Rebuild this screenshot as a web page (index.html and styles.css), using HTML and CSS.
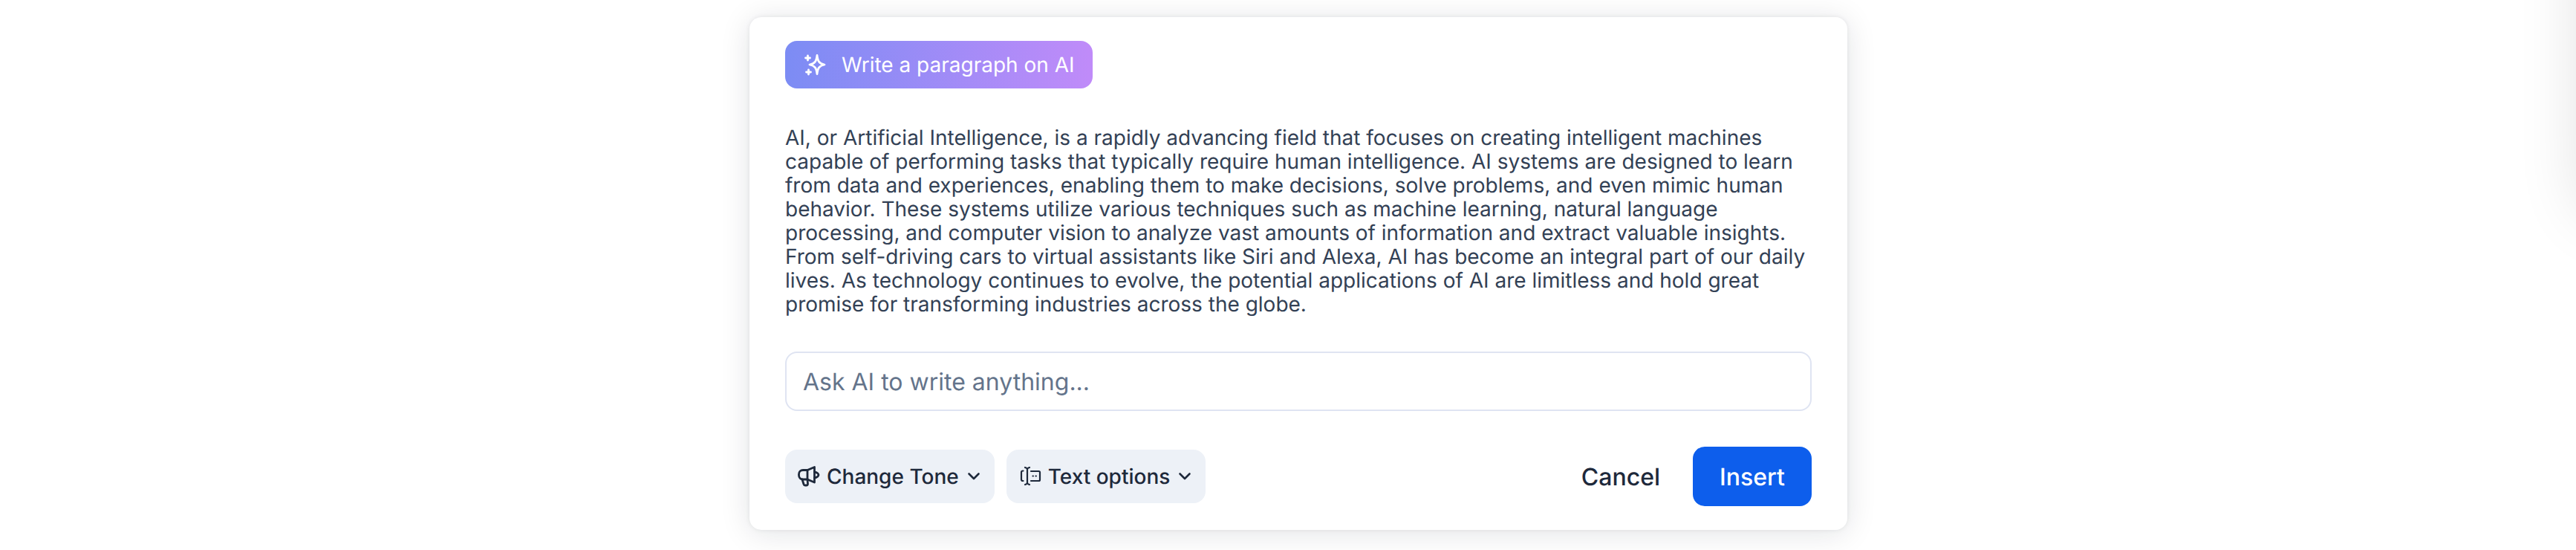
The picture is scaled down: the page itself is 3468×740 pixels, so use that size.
FILE: index.html
```html
<!DOCTYPE html>
<html lang="en">
<head>
<meta charset="utf-8">
<title>AI writer</title>
<link rel="stylesheet" href="styles.css">
</head>
<body>
<div class="edge-shade"></div>
<main class="card">
  <div class="prompt-pill">
    <svg class="pill-icon" viewBox="0 0 32 32" fill="none" stroke="#fff" stroke-width="2.8" stroke-linejoin="round" stroke-linecap="round">
      <path d="M19 3.500c1 8 2.700 11 10 12.500-7.300 1.500-9 4.500-10 12.500-1-8-2.700-11-10-12.500 7.300-1.500 9-4.500 10-12.500z"/>
      <path d="M6.500 4v6M3.500 7h6M7.500 23v6M4.500 26h6"/>
    </svg>
    <span>Write a paragraph on AI</span>
  </div>
  <p class="result">AI, or Artificial Intelligence, is a rapidly advancing field that focuses on creating intelligent machines capable of performing tasks that typically require human intelligence. AI systems are designed to learn from data and experiences, enabling them to make decisions, solve problems, and even mimic human behavior. These systems utilize various techniques such as machine learning, natural language processing, and computer vision to analyze vast amounts of information and extract valuable insights. From self-driving cars to virtual assistants like Siri and Alexa, AI has become an integral part of our daily lives. As technology continues to evolve, the potential applications of AI are limitless and hold great promise for transforming industries across the globe.</p>
  <input class="ask" type="text" placeholder="Ask AI to write anything...">
  <footer class="actions">
    <div class="chips">
      <button class="chip" type="button">
        <svg class="chip-icon" viewBox="0 0 32 32" fill="none" stroke="#1e293b" stroke-width="2.800" stroke-linejoin="round" stroke-linecap="round">
          <path d="M23.500 3.500L14 7.500H8A5.500 5.500 0 0 0 2.500 13v1.500A5.500 5.500 0 0 0 8 20h6l9.500 4z"/>
          <path d="M23.500 10c3.500.5 5.500 2.500 5.500 4s-2 3.500-5.500 4"/>
          <path d="M7 20l2 6.500a2 2 0 0 0 2 1.500h1.500a2 2 0 0 0 2-2L14 20"/>
          <path d="M14 7.500V20"/>
        </svg>
        <span>Change Tone</span>
        <svg class="chev" viewBox="0 0 24 24" fill="none" stroke="#1e293b" stroke-width="2.600" stroke-linecap="round" stroke-linejoin="round"><path d="M5.500 8.500l6.500 6.500 6.500-6.500"/></svg>
      </button>
      <button class="chip" type="button">
        <svg class="chip-icon" viewBox="0 0 32 32" fill="none" stroke="#1e293b" stroke-width="2.200" stroke-linecap="round" stroke-linejoin="round">
          <path d="M6.500 8.500H6Q4 8.500 4 10.500v9.500q0 2 2 2h.5"/>
          <path d="M17 9h10.500q1.500 0 1.500 1.500v10q0 1.500-1.500 1.500H17"/>
          <path d="M9 4l1.500.5q1.500.5 1.500 2.500v17q0 2-1.500 2.500L9 27M15 4l-1.500.5Q12 5 12 7M15 27l-1.500-.5Q12 26 12 24"/>
          <path d="M19.500 15.500h.4M23.500 15.500h.4"/>
        </svg>
        <span>Text options</span>
        <svg class="chev" viewBox="0 0 24 24" fill="none" stroke="#1e293b" stroke-width="2.600" stroke-linecap="round" stroke-linejoin="round"><path d="M5.500 8.500l6.500 6.500 6.500-6.500"/></svg>
      </button>
    </div>
    <div class="buttons">
      <button class="cancel" type="button">Cancel</button>
      <button class="insert" type="button">Insert</button>
    </div>
  </footer>
</main>
</body>
</html>
```
FILE: styles.css
```css
* { box-sizing: border-box; }
html, body { margin: 0; height: 100%; background: #fff; overflow: hidden; }
body {
  font-family: Inter, "Noto Sans", sans-serif;
  text-rendering: geometricPrecision;
  padding: 23px 0 0 1009px;
}
.edge-shade {
  position: fixed;
  left: 3480px;
  top: -200px;
  width: 100px;
  height: 480px;
  border-radius: 30px;
  box-shadow: 0 8px 90px rgba(0, 0, 0, 0.14);
}
.card {
  width: 1478px;
  height: 690px;
  padding: 32px 48px;
  background: #fff;
  border-radius: 16px;
  box-shadow: 0 4px 40px rgba(15, 23, 42, 0.12), 0 0 6px rgba(15, 23, 42, 0.08);
  display: flex;
  flex-direction: column;
}
.prompt-pill {
  align-self: flex-start;
  display: flex;
  align-items: center;
  gap: 20px;
  height: 64px;
  padding: 0 24px;
  border-radius: 16px;
  background: linear-gradient(90deg, #7c8cf4, #c08bf9);
  color: #fff;
  font-size: 28px;
  font-weight: 380;
}
.pill-icon { width: 32px; height: 32px; flex: none; }
.result {
  margin: 50px 0 0;
  color: #334155;
  font-size: 28px;
  font-weight: 370;
  line-height: 32px;
}
.ask {
  display: block;
  width: 100%;
  height: 80px;
  margin-top: 48px;
  padding: 0 22px;
  border: 2px solid #dfe4f2;
  border-radius: 16px;
  font: 400 32px Inter, sans-serif;
  text-rendering: geometricPrecision;
  color: #0f172a;
  outline: none;
}
.ask::placeholder { color: #64748b; opacity: 1; }
.actions {
  margin-top: 48px;
  display: flex;
  align-items: center;
  justify-content: space-between;
}
.chips, .buttons { display: flex; align-items: center; }
.chips { gap: 16px; }
.chip {
  display: flex;
  align-items: center;
  height: 72px;
  padding: 0 16px;
  border: 0;
  border-radius: 16px;
  background: #edf1f7;
  color: #1e293b;
  font: 500 28px Inter, sans-serif;
  text-rendering: geometricPrecision;
}
.chip-icon { width: 32px; height: 32px; flex: none; margin-right: 8px; }
.chev { width: 24px; height: 24px; flex: none; margin-left: 8px; }
.buttons { gap: 44px; }
.cancel, .insert {
  border: 0;
  font: 450 32px Inter, sans-serif;
  text-rendering: geometricPrecision;
  background: none;
  padding: 0;
}
.cancel { color: #1e293b; }
.insert {
  width: 160px;
  height: 80px;
  border-radius: 16px;
  background: #0d5eec;
  color: #fff;
}
```
